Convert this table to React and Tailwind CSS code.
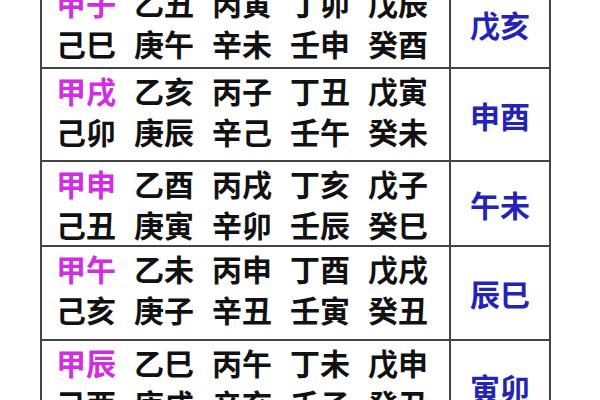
import React from "react";

const rows = [
  { h: "h-[89px]", a: ["甲子", "乙丑", "丙寅", "丁卯", "戊辰"], b: ["己巳", "庚午", "辛未", "壬申", "癸酉"], k: "戊亥" },
  { h: "h-[93px]", a: ["甲戌", "乙亥", "丙子", "丁丑", "戊寅"], b: ["己卯", "庚辰", "辛己", "壬午", "癸未"], k: "申酉" },
  { h: "h-[85px]", a: ["甲申", "乙酉", "丙戌", "丁亥", "戊子"], b: ["己丑", "庚寅", "辛卯", "壬辰", "癸巳"], k: "午未" },
  { h: "h-[94px]", a: ["甲午", "乙未", "丙申", "丁酉", "戊戌"], b: ["己亥", "庚子", "辛丑", "壬寅", "癸丑"], k: "辰巳" },
  { h: "h-[94px]", a: ["甲辰", "乙巳", "丙午", "丁未", "戊申"], b: ["己酉", "庚戌", "辛亥", "壬子", "癸丑"], k: "寅卯" },
];

function Line({ items, first }) {
  return (
    <div className="grid grid-cols-[78px_78px_78px_78px_78px] h-[41px] items-center">
      {items.map((t, i) => (
        <span key={i} className={first && i === 0 ? "text-[#d02ee0]" : "text-[#111]"}>
          {t}
        </span>
      ))}
    </div>
  );
}

export default function App() {
  return (
    <div
      className="w-[600px] h-[400px] overflow-hidden bg-white"
      style={{ fontFamily: '"Noto Sans CJK SC", "Noto Sans", sans-serif' }}
    >
      <div className="ml-[40px] mt-[-20px] w-[511px] border-x-2 border-[#444] text-[30px] font-semibold leading-none">
        {rows.map((r, i) => (
          <div key={i} className={`flex border-b-2 border-[#444] ${r.h}`}>
            <div className={`w-[409px] border-r-2 border-[#444] pl-[14px] ${i === 0 ? "pt-[1px]" : ""}`}>
              <Line items={r.a} first />
              <Line items={r.b} />
            </div>
            <div className="flex-1 flex items-center justify-center text-[#2323b8]">{r.k}</div>
          </div>
        ))}
      </div>
    </div>
  );
}
